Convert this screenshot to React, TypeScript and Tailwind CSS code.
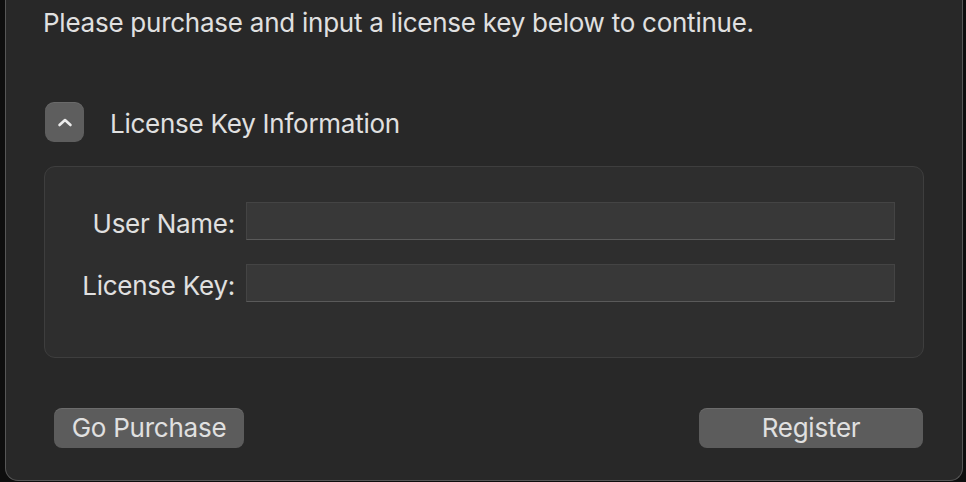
import React from "react";

function Chevron() {
  return (
    <svg width="18" height="11" viewBox="0 0 18 11" fill="none">
      <path d="M3.5 8 L9 3 L14.5 8" stroke="#ececec" strokeWidth="2.6" strokeLinecap="round" strokeLinejoin="round" />
    </svg>
  );
}

export default function App() {
  const font = { fontFamily: "Inter, 'Liberation Sans', sans-serif" };
  return (
    <div className="h-[482px] w-[966px] bg-[#0e0e0e] flex overflow-hidden" style={font}>
      <div className="ml-[5px] w-[958px] h-[481px] bg-[#282828] border-x border-b border-[#565656] rounded-b-[13px] flex flex-col text-[#e0e0e0] text-[26px] leading-[32px] tracking-[-0.25px]">
        <div className="pl-[37px] mt-[7px]">Please purchase and input a license key below to continue.</div>

        <div className="flex items-center mt-[63px] pl-[39px]">
          <div className="w-[39px] h-[40px] rounded-[9px] bg-[#5e5e5e] flex items-center justify-center shadow-[inset_0_1px_0_rgba(255,255,255,0.08)]">
            <Chevron />
          </div>
          <div className="ml-[26px] pt-[4px]">License Key Information</div>
        </div>

        <div className="mx-[38px] mt-[24px] h-[192px] rounded-[11px] bg-[#2e2e2e] border border-[#3e3e3e] pt-[35px] pr-[28px] flex flex-col gap-[24px]">
          <div className="flex items-center">
            <div className="w-[190px] text-right pt-[5px]">User Name:</div>
            <div className="ml-[11px] flex-1 h-[38px] bg-[#383838] border border-[#444444] border-b-[#5a5a5a]" />
          </div>
          <div className="flex items-center">
            <div className="w-[190px] text-right pt-[5px]">License Key:</div>
            <div className="ml-[11px] flex-1 h-[38px] bg-[#383838] border border-[#444444] border-b-[#5a5a5a]" />
          </div>
        </div>

        <div className="flex justify-between items-center mt-[50px] pl-[48px] pr-[39px]">
          <div className="w-[190px] h-[40px] rounded-[8px] bg-[#5c5c5c] shadow-[inset_0_1px_0_rgba(255,255,255,0.1)] flex items-center justify-center">Go Purchase</div>
          <div className="w-[224px] h-[40px] rounded-[8px] bg-[#5c5c5c] shadow-[inset_0_1px_0_rgba(255,255,255,0.1)] flex items-center justify-center">Register</div>
        </div>
      </div>
    </div>
  );
}
